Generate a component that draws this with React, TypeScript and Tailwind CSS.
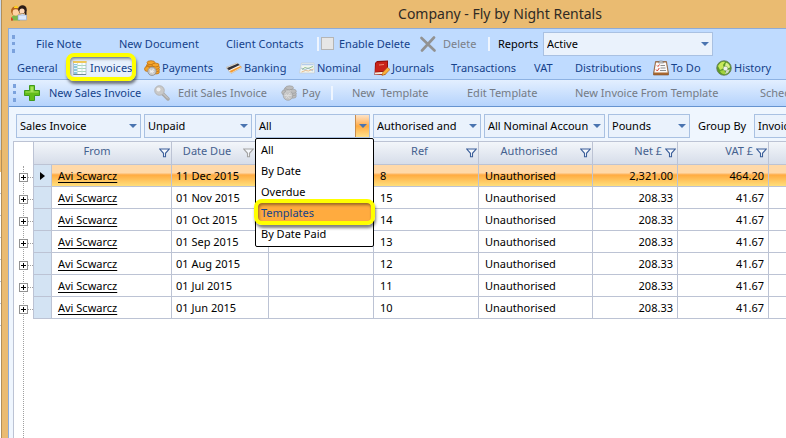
import { useState } from 'react';
import type { ReactNode } from 'react';

const FileIcon: React.FC<{ children: ReactNode }> = ({ children }) => (
  <svg viewBox="0 0 16 16" className="h-4 w-4 shrink-0" aria-hidden="true">
    {children}
  </svg>
);

const PeopleIcon = () => (
  <FileIcon>
    <path d="M0 15.500c0-4 2-5.500 5-5.500s4 1.500 4 5.500z" fill="#7db84a" />
    <path d="M8 15c0-4 1-6 3.500-6S15.500 11 15.500 15z" fill="#e8f0fb" />
    <circle cx="4.500" cy="6" r="4.500" fill="#b5651d" />
    <circle cx="4.800" cy="7.500" r="3.200" fill="#ffd3a3" />
    <circle cx="11.500" cy="4.500" r="4.200" fill="#2b1c17" />
    <circle cx="11" cy="6" r="2.600" fill="#ffd9b8" />
    <path d="M3 2l2-1.500L7 2v1H3z" fill="#ffd21f" />
    <path d="M14 5h1.500v5H14z" fill="#2b1c17" />
    <rect x="7" y="10" width="8.500" height="5" fill="#dbe7fa" stroke="#7f9fd0" strokeWidth=".6" />
    <path d="M0 12l2 2v1.500H0z" fill="#d8402a" />
  </FileIcon>
);

const InvoiceIcon = () => (
  <FileIcon>
    <rect x="1.500" y="1.500" width="12.500" height="13" fill="#fafdff" stroke="#a9b6c2" strokeWidth=".8" />
    <path d="M1 1h13.500v2H1z" fill="#f0c95a" />
    <path d="M2 5.500h12M2 8.500h12M2 11.500h12" stroke="#9fd0b4" strokeWidth=".9" />
    <path d="M2 4h3v10H2z" fill="#8cc7e0" />
    <path d="M2 5.500h3M2 8.500h3M2 11.500h3" stroke="#e9f7ff" strokeWidth=".9" />
    <path d="M5.500 3v11M10 3v11" stroke="#c3dfd5" strokeWidth=".8" />
    <path d="M1.500 14.500H14" stroke="#6f8795" />
  </FileIcon>
);

const CoinsIcon: React.FC = () => (
  <FileIcon>
    <g fill="#f4a52c" stroke="#b76a10" strokeWidth=".7">
      <ellipse cx="6" cy="6.500" rx="4" ry="2.300" />
      <ellipse cx="12" cy="12" rx="3.400" ry="2" />
      <ellipse cx="12" cy="9.700" rx="3.500" ry="2" />
      <ellipse cx="12" cy="7.300" rx="3.500" ry="2" />
      <ellipse cx="7" cy="4.500" rx="4" ry="2" />
      <ellipse cx="7" cy="2.700" rx="4" ry="2" />
      <ellipse cx="11.500" cy="5" rx="3.600" ry="1.900" />
      <ellipse cx="3.500" cy="9" rx="3" ry="2.500" />
    </g>
    <circle cx="8" cy="11.300" r="4.200" fill="#c9c9c9" stroke="#858585" strokeWidth=".7" />
    <path d="M6 9.500l3 4M9.500 9l-3 4M6 11.300h4" stroke="#f4f4f4" strokeWidth=".9" />
  </FileIcon>
);

const PayIcon = () => (
  <FileIcon>
    <g fill="#bdbdbd" stroke="#979797" strokeWidth=".6">
      <ellipse cx="7" cy="4.500" rx="4" ry="2.300" />
      <ellipse cx="8.500" cy="2.800" rx="4" ry="2" />
      <ellipse cx="12" cy="11" rx="3.300" ry="2.200" />
      <ellipse cx="12" cy="8.700" rx="3.400" ry="2" />
      <ellipse cx="11.800" cy="6.300" rx="3.500" ry="2.100" />
      <ellipse cx="4" cy="7.500" rx="3.300" ry="2.500" />
      <circle cx="7" cy="10.500" r="4.800" fill="#c6c6c6" />
    </g>
    <path d="M4.500 8.500l4 5M9 8l-4 5M3.500 10.500h7M5 6h5" stroke="#dedede" strokeWidth=".9" />
  </FileIcon>
);

const CardIcon = () => (
  <FileIcon>
    <path d="M0 7.500l11-4.500 5 4.500L5 13.500z" fill="#fff7ea" stroke="#b8ab98" strokeWidth=".6" />
    <path d="M1 8l11-4.500 1.700 1.500L2.800 10.200z" fill="#33323a" />
    <path d="M3.600 11l10.900-5 1 1L5 12.700z" fill="#f39b33" />
  </FileIcon>
);

const ChartIcon = () => (
  <FileIcon>
    <path d="M2.500 3H15l.5 10H.500z" fill="#f1f6f1" stroke="#c3cbd2" strokeWidth=".7" />
    <path d="M3 4.500h11.500" stroke="#b5cceb" strokeWidth="1.500" />
    <path d="M3 9.500l3-2 3 1 5-2" fill="none" stroke="#7db476" strokeWidth=".8" />
    <path d="M2.500 12l4-1.500 3 .5 5-2" fill="none" stroke="#e5ad74" strokeWidth=".8" />
    <path d="M2 8l4 2 3-2 5 3" fill="none" stroke="#90a9c7" strokeWidth=".7" />
  </FileIcon>
);

const BookIcon = () => (
  <FileIcon>
    <path d="M1 3l2-2 11-.5V11l-3 4H.500z" fill="#8f100c" />
    <path d="M2 2.500L13 1.500v9L1 12z" fill="#c9231a" />
    <path d="M1 12.500l10-.8 2.500-1.500v1.500L11 14 1 14.500z" fill="#f5e9da" />
    <path d="M5 5l5-.5" stroke="#ef8a70" />
    <path d="M13.500 7.500L16 9.500l-5 5-3 1 .8-3z" fill="#f9b13d" stroke="#b76311" strokeWidth=".6" />
  </FileIcon>
);

const ClipboardIcon = () => (
  <FileIcon>
    <path d="M2.500 1.500h11L15.500 13v2H.500v-2z" fill="#a9672f" stroke="#80512a" strokeWidth=".6" />
    <path d="M3 2.500h10L14.700 12.500H1.300z" fill="#fafafa" />
    <path d="M5.500 3l1-2h3l1 2z" fill="#cfcfcf" stroke="#777" strokeWidth=".6" />
    <path d="M7.500 5.500H12M7.500 8h5M7 10.500h6" stroke="#8d8d8d" />
    <path d="M4 5.500l1 1 1.500-2M3 9.500l1.300 1.500 2-3" fill="none" stroke="#d8402f" />
  </FileIcon>
);

const GlobeIcon = () => (
  <FileIcon>
    <circle cx="8" cy="8" r="7.300" fill="#5d9c28" stroke="#68795b" strokeWidth=".8" />
    <path d="M2 6c2-4 5-5 7-4L7 5l1 3-4 2z" fill="#c8e85a" />
    <path d="M10 2.500c3 1 4 3 4 5l-3 1-2-3z" fill="#d9f08c" />
    <path d="M4 11l4-1 2 4c-3 1-5-1-6-3z" fill="#a3d23d" />
    <circle cx="9.500" cy="8.500" r="2.300" fill="#eef2ea" stroke="#8ba36d" strokeWidth=".6" />
    <path d="M10.500 10l3.500-.5-2 3.500-3 1z" fill="#cfd9c4" />
  </FileIcon>
);

const PlusIcon = () => (
  <FileIcon>
    <path
      d="M5.500.500h5v5h5v5h-5v5h-5v-5h-5v-5h5z"
      fill="#62bd19"
      stroke="#3f9a1c"
      strokeLinejoin="round"
    />
    <path d="M6.500 1.500h3v5h5v1h-13v-1h5z" fill="#a4e25a" />
  </FileIcon>
);

const WrenchIcon = () => (
  <FileIcon>
    <path d="M9 9l5 5" stroke="#a9a9a9" strokeWidth="3.500" strokeLinecap="round" />
    <circle cx="5.500" cy="5.500" r="4.800" fill="#c9c9c9" stroke="#adadad" strokeWidth=".8" />
    <circle cx="4.500" cy="4.500" r="2" fill="#efefef" />
    <path d="M9 8.500l5 5" stroke="#d6d6d6" />
  </FileIcon>
);

const CrossIcon = () => (
  <FileIcon>
    <path d="M1.500 2l13 12.500M14 1.500L2 14.500" stroke="#929292" strokeWidth="2.600" strokeLinecap="round" />
  </FileIcon>
);

const FilterIcon: React.FC<{ faded?: boolean }> = ({ faded }) => (
  <svg viewBox="0 0 11 10" className="h-[10px] w-[11px] shrink-0" aria-hidden="true">
    <path
      d="M.8 1h9.400L6.500 5.300v3.500h-2V5.300z"
      fill="#f5f8fc"
      stroke={faded ? '#a3a3a3' : '#3c5f9a'}
      strokeWidth="1.100"
    />
  </svg>
);

const Arrow = () => (
  <svg viewBox="0 0 8 4" className="h-1 w-2" aria-hidden="true">
    <path d="M0 0h8L4 4z" fill="#4a74b0" />
  </svg>
);

const Grip: React.FC = () => (
  <div className="h-[18px] w-0 shrink-0 border-l-3 border-dotted border-[#7ba2dd]" />
);

const Separator: React.FC = () => <div className="h-[14px] w-[2px] shrink-0 bg-[#eef5ff]" />;

// Yellow marker that highlights the step being explained
const Marker: React.FC<{ className: string }> = ({ className }) => (
  <span
    className={`pointer-events-none absolute z-20 rounded-lg border-4 border-[#ffff00] shadow-[1px_3px_3px_rgba(0,0,0,0.5),inset_1px_2px_3px_rgba(0,0,0,0.4)] ${className}`}
  />
);

const Combo: React.FC<{ label: string; value: string; className: string }> = ({
  label,
  value,
  className,
}) => (
  <div className={`relative h-6 shrink-0 border border-[#a9c1e2] bg-[#eaf2fc] ${className}`}>
    <select
      aria-label={label}
      className="h-full w-full appearance-none overflow-hidden text-clip bg-transparent pl-[3px] pr-[14px] text-black outline-none"
    >
      <option>{value}</option>
    </select>
    <span className="pointer-events-none absolute inset-y-0 right-[3px] flex items-center">
      <Arrow />
    </span>
  </div>
);

const tabs: { name: string; icon?: ReactNode; width: string }[] = [
  { name: 'General', width: 'w-[55px]' },
  { name: 'Invoices', icon: <InvoiceIcon />, width: 'w-[72px]' },
  { name: 'Payments', icon: <CoinsIcon />, width: 'w-[82px]' },
  { name: 'Banking', icon: <CardIcon />, width: 'w-[73px]' },
  { name: 'Nominal', icon: <ChartIcon />, width: 'w-[75px]' },
  { name: 'Journals', icon: <BookIcon />, width: 'w-[77px]' },
  { name: 'Transactions', width: 'w-[83px]' },
  { name: 'VAT', width: 'w-[41px]' },
  { name: 'Distributions', width: 'w-[78px]' },
  { name: 'To Do', icon: <ClipboardIcon />, width: 'w-[63px]' },
  { name: 'History', icon: <GlobeIcon />, width: 'w-[70px]' },
];

const periods = ['All', 'By Date', 'Overdue', 'Templates', 'By Date Paid'];

const columns = [
  { title: 'From', width: 'w-[120px]', align: 'text-center', filter: true },
  { title: 'Date Due', width: 'w-[97px]', align: 'text-center', filter: true, faded: true },
  { title: '', width: 'w-[105px]', align: '' },
  { title: 'Ref', width: 'w-[105px]', align: 'text-center', filter: true },
  { title: 'Authorised', width: 'w-[114px]', align: 'text-center', filter: true },
  { title: 'Net £', width: 'w-[85px]', align: 'text-right', filter: true },
  { title: 'VAT £', width: 'w-[91px]', align: 'text-right', filter: true },
];

const invoices = [
  { date: '11 Dec 2015', ref: '8', net: '2,321.00', vat: '464.20' },
  { date: '01 Nov 2015', ref: '15', net: '208.33', vat: '41.67' },
  { date: '01 Oct 2015', ref: '14', net: '208.33', vat: '41.67' },
  { date: '01 Sep 2015', ref: '13', net: '208.33', vat: '41.67' },
  { date: '01 Aug 2015', ref: '12', net: '208.33', vat: '41.67' },
  { date: '01 Jul 2015', ref: '11', net: '208.33', vat: '41.67' },
  { date: '01 Jun 2015', ref: '10', net: '208.33', vat: '41.67' },
];

const cell = 'border-b border-r border-[#bcc3d4] text-black';

const App: React.FC = () => {
  const [open, setOpen] = useState(true);
  const [period, setPeriod] = useState('All');
  const [tab, setTab] = useState('Invoices');

  return (
    <div className="flex min-h-screen overflow-hidden bg-[#eabb71] font-['Noto_Sans','Open_Sans',sans-serif] text-[11px] leading-4">
      {/* Edge of the window behind */}
      <div className="flex w-[2px] shrink-0 flex-col border-r border-[#b38f58] bg-white">
        <div className="h-[150px] bg-[#c9d9ee]" />
        <div className="h-[22px] bg-[#f6bd6b]" />
        {invoices.map((row) => (
          <div key={row.ref} className="h-[22px] border-b border-[#bcc3d4]" />
        ))}
      </div>

      <div className="flex min-w-0 flex-1 flex-col pl-[6px]">
        <header className="relative flex h-7 shrink-0 items-center justify-center">
          <span className="absolute left-[3px] top-[5px]">
            <PeopleIcon />
          </span>
          <h1 className="whitespace-nowrap pl-[206px] text-sm text-[#2f2a24]">
            Company - Fly by Night Rentals
          </h1>
        </header>

        <main className="flex flex-1 flex-col border-l border-t border-[#8fabd6] bg-[#eff6fe]">
          <div className="bg-[#bfdbff] text-[#15428b]">
            <div className="flex h-[29px] items-center whitespace-nowrap pl-[3px]">
              <Grip />
              <button className="ml-[21px] w-[83px] text-left">File Note</button>
              <button className="w-[107px] text-left">New Document</button>
              <button className="w-[91px] text-left">Client Contacts</button>
              <Separator />
              <label className="ml-[2px] flex w-[99px] items-center gap-[5px]">
                <input
                  type="checkbox"
                  className="h-[13px] w-[13px] shrink-0 appearance-none border border-[#b5b5b5] bg-[#e6e6e6]"
                />
                Enable Delete
              </label>
              <button className="flex w-[68px] items-center gap-[7px] text-[#7b7f88]">
                <CrossIcon />
                Delete
              </button>
              <Separator />
              <label htmlFor="reports" className="ml-2 w-[45px] text-black">
                Reports
              </label>
              <div className="relative h-6 w-[170px] shrink-0 border border-[#a9c1e2] bg-[#eaf2fc]">
                <select
                  id="reports"
                  className="h-full w-full appearance-none bg-transparent pl-[3px] pr-[14px] text-black outline-none"
                >
                  <option>Active</option>
                </select>
                <span className="pointer-events-none absolute inset-y-0 right-[3px] flex items-center">
                  <Arrow />
                </span>
              </div>
            </div>

            <nav className="flex h-[21px] items-start whitespace-nowrap pl-2">
              {tabs.map(({ name, icon, width }) => (
                <button
                  key={name}
                  onClick={() => setTab(name)}
                  className={`relative flex h-5 shrink-0 items-center ${width}`}
                >
                  {name === tab && (
                    <>
                      <span className="absolute inset-y-0 -left-[2px] w-[62px] bg-[#e7f0fc]" />
                      <Marker className="-left-[6px] -top-[5px] h-7 w-[70px]" />
                    </>
                  )}
                  <span className="relative flex items-center gap-[2px]">
                    {icon}
                    {name}
                  </span>
                </button>
              ))}
            </nav>
          </div>

          <div className="flex h-7 items-center whitespace-nowrap border-b border-t border-b-[#6593cf] border-t-[#8db2e3] bg-linear-to-b from-[#e3efff] to-[#b5d3fc] pl-1 text-[#757b85]">
            <Grip />
            <button className="ml-2 flex w-[130px] shrink-0 items-center gap-[9px] text-[#15428b]">
              <PlusIcon />
              New Sales Invoice
            </button>
            <button className="flex w-[127px] shrink-0 items-center gap-2">
              <WrenchIcon />
              Edit Sales Invoice
            </button>
            <button className="flex w-[50px] shrink-0 items-center gap-[5px]">
              <PayIcon />
              Pay
            </button>
            <Separator />
            <button className="ml-[19px] w-[115px] shrink-0 whitespace-pre text-left">New  Template</button>
            <button className="w-[108px] shrink-0 text-left">Edit Template</button>
            <button className="w-[185px] shrink-0 text-left">New Invoice From Template</button>
            <button className="shrink-0 text-left">Schedule</button>
          </div>

          <div className="flex h-[34px] items-end gap-[3px] whitespace-nowrap pb-[3px] pl-[7px]">
            <Combo label="Type" value="Sales Invoice" className="w-[125px]" />
            <Combo label="Status" value="Unpaid" className="w-[108px]" />
            <div className="relative shrink-0">
              <button
                aria-haspopup="listbox"
                aria-expanded={open}
                onClick={() => setOpen(!open)}
                className="flex h-6 w-[115px] items-center justify-between border border-[#a9c1e2] bg-[#eaf2fc] pl-[3px] text-black"
              >
                {period}
                <span className="flex h-full w-[14px] items-center justify-center border-l border-[#c98d4d] bg-linear-to-b from-[#fde3c6] via-[#ffab3f] to-[#ffe08a]">
                  <Arrow />
                </span>
              </button>
              {open && (
                <ul
                  role="listbox"
                  className="absolute left-0 top-6 z-10 w-[119px] rounded-xs border border-black bg-white pb-[2px]"
                >
                  {periods.map((name) => (
                    <li
                      key={name}
                      role="option"
                      aria-selected={name === period}
                      onClick={() => setPeriod(name)}
                      className={`relative h-[21px] pl-[5px] leading-[21px] ${
                        name === 'Templates' ? 'bg-[#ffab3f] text-[#15428b]' : 'text-black'
                      }`}
                    >
                      {name}
                      {name === 'Templates' && (
                        <Marker className="-left-[2px] -right-[2px] -top-[3px] h-[26px]" />
                      )}
                    </li>
                  ))}
                </ul>
              )}
            </div>
            <Combo label="Authorisation" value="Authorised and" className="w-[108px]" />
            <Combo label="Account" value="All Nominal Accoun" className="w-[121px]" />
            <Combo label="Currency" value="Pounds" className="w-[82px]" />
            <span className="ml-[5px] w-[53px] shrink-0 leading-6">Group By</span>
            <Combo label="Group By" value="Invoice" className="w-[120px]" />
          </div>

          <div className="ml-1 flex flex-1 border-l border-t border-[#bcc3d4] bg-white">
            <div className="relative w-[19px] shrink-0 pt-6">
              <div className="absolute bottom-0 left-[9px] top-6 border-l border-dotted border-[#a0a0a0]" />
              {invoices.map((row) => (
                <div key={row.ref} className="relative flex h-[22px] items-center pl-[5px]">
                  <button
                    aria-label={`Expand invoice ${row.ref}`}
                    className="flex h-[9px] w-[9px] items-center justify-center border border-[#919191] bg-white"
                  >
                    <svg viewBox="0 0 5 5" className="h-[5px] w-[5px]" aria-hidden="true">
                      <path d="M0 2.500h5M2.500 0v5" stroke="#000" />
                    </svg>
                  </button>
                  <span className="flex-1 border-t border-dotted border-[#a0a0a0]" />
                </div>
              ))}
            </div>

            <table className="w-full table-fixed border-separate border-spacing-0 self-start whitespace-nowrap border-l border-[#bcc3d4]">
              <thead>
                <tr className="h-[23px] bg-linear-to-b from-[#f3f6fa] to-[#d5dce9] text-[#45618f]">
                  <th className="w-[18px] border-b border-[#bcc3d4]" />
                  {columns.map((column, index) => (
                    <th
                      key={index}
                      className={`border-b border-r border-[#bcc3d4] p-0 font-normal ${column.width}`}
                    >
                      <span
                        className={`flex items-center gap-[3px] pl-[2px] ${column.faded ? 'pr-[14px]' : 'pr-px'}`}
                      >
                        <span className={`flex-1 pb-1 ${index === 0 ? 'pr-4' : ''} ${column.align}`}>
                          {column.title}
                        </span>
                        {column.filter && <FilterIcon faded={column.faded} />}
                      </span>
                    </th>
                  ))}
                  <th className="border-b border-[#bcc3d4]" />
                </tr>
              </thead>
              <tbody>
                {invoices.map((row, index) => (
                  <tr
                    key={row.ref}
                    className={`h-[22px] ${
                      index === 0
                        ? 'bg-linear-to-b from-[#ffd9a9] from-35% via-[#ffab3f] via-45% to-[#ffe37f]'
                        : 'bg-white'
                    }`}
                  >
                    <td className="border-b border-r border-[#bcc3d4] bg-[#d3e3f3] p-0">
                      {index === 0 && (
                        <svg viewBox="0 0 5 8" className="ml-[6px] h-2 w-[5px]" aria-hidden="true">
                          <path d="M0 0l5 4-5 4z" fill="#000" />
                        </svg>
                      )}
                    </td>
                    <td className={`${cell} px-[6px]`}>
                      <a href="#" className="underline underline-offset-2">
                        Avi Scwarcz
                      </a>
                    </td>
                    <td className={`${cell} px-1`}>{row.date}</td>
                    <td className={cell} />
                    <td className={`${cell} px-[6px]`}>{row.ref}</td>
                    <td className={`${cell} px-[6px]`}>Unauthorised</td>
                    <td className={`${cell} px-1 text-right`}>{row.net}</td>
                    <td className={`${cell} px-1 text-right`}>{row.vat}</td>
                    <td className="border-b border-[#bcc3d4]" />
                  </tr>
                ))}
              </tbody>
            </table>
          </div>
        </main>
      </div>
    </div>
  );
};

export default App;
